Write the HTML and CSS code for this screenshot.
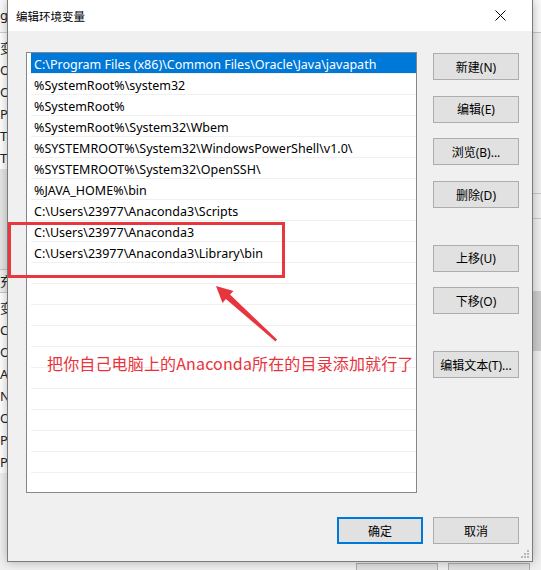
FILE: index.html
```html
<!DOCTYPE html>
<html lang="zh-CN">
<head>
<meta charset="utf-8">
<title>编辑环境变量</title>
<link rel="stylesheet" href="styles.css">
</head>
<body>
<div class="desk">
  <div class="behind">
    <div class="b-main">
      <div class="b-left">
        <div class="b-top">g</div>
        <div class="b-group">
          <div class="b-line">变</div>
          <div class="b-line">O</div>
          <div class="b-line">O</div>
          <div class="b-line">Pa</div>
          <div class="b-line">TE</div>
          <div class="b-line">TM</div>
        </div>
        <div class="b-band"></div>
        <div class="b-head">充</div>
        <div class="b-group">
          <div class="b-line">变</div>
          <div class="b-line">Co</div>
          <div class="b-line">Oi</div>
          <div class="b-line">A</div>
          <div class="b-line">N</div>
          <div class="b-line">O</div>
          <div class="b-line">Pa</div>
          <div class="b-line">PA</div>
        </div>
      </div>
      <div class="b-right">
        <div class="b-rtop"></div>
        <div class="b-rline b-r1"></div>
        <div class="b-rline b-r2"></div>
        <div class="b-thumb"></div>
      </div>
    </div>
    <div class="b-foot">
      <span class="b-btn"></span>
      <span class="b-btn"></span>
    </div>
  </div>

  <div class="dialog">
    <div class="titlebar">
      <span class="title">编辑环境变量</span>
      <svg class="close" width="11" height="11" viewBox="0 0 11 11"><path d="M0.5 0.5 L10.5 10.5 M10.5 0.5 L0.5 10.5" stroke="#000" stroke-width="1" fill="none"/></svg>
    </div>
    <div class="body">
      <div class="main">
        <div class="list">
          <div class="row sel">C:\Program Files (x86)\Common Files\Oracle\Java\javapath</div>
          <div class="row">%SystemRoot%\system32</div>
          <div class="row">%SystemRoot%</div>
          <div class="row">%SystemRoot%\System32\Wbem</div>
          <div class="row">%SYSTEMROOT%\System32\WindowsPowerShell\v1.0\</div>
          <div class="row">%SYSTEMROOT%\System32\OpenSSH\</div>
          <div class="row">%JAVA_HOME%\bin</div>
          <div class="row">C:\Users\23977\Anaconda3\Scripts</div>
          <div class="row">C:\Users\23977\Anaconda3</div>
          <div class="row">C:\Users\23977\Anaconda3\Library\bin</div>
          <div class="row"></div>
          <div class="row"></div>
          <div class="row"></div>
          <div class="row"></div>
          <div class="row"></div>
          <div class="row"></div>
          <div class="row"></div>
          <div class="row"></div>
          <div class="row"></div>
          <div class="row"></div>
          <div class="row"></div>
          <div class="row"></div>
        </div>
        <div class="side">
          <button class="btn">新建(N)</button>
          <button class="btn">编辑(E)</button>
          <button class="btn">浏览(B)...</button>
          <button class="btn">删除(D)</button>
          <button class="btn spaced">上移(U)</button>
          <button class="btn">下移(O)</button>
          <button class="btn spaced">编辑文本(T)...</button>
        </div>
      </div>
      <div class="footer">
        <button class="btn default">确定</button>
        <button class="btn">取消</button>
      </div>
    </div>
    <svg class="grip" width="10" height="10" viewBox="0 0 10 10">
      <rect x="7" y="1" width="2" height="2" fill="#b8b8b8"/>
      <rect x="4" y="4" width="2" height="2" fill="#b8b8b8"/>
      <rect x="7" y="4" width="2" height="2" fill="#b8b8b8"/>
      <rect x="1" y="7" width="2" height="2" fill="#b8b8b8"/>
      <rect x="4" y="7" width="2" height="2" fill="#b8b8b8"/>
      <rect x="7" y="7" width="2" height="2" fill="#b8b8b8"/>
    </svg>
  </div>

  <svg class="annot" width="541" height="570" viewBox="0 0 541 570">
    <rect x="9.5" y="223.5" width="274" height="53" fill="none" stroke="#e7383f" stroke-width="3"/>
    <polygon points="216,286 233.5,291 230,294.5 277,339.5 275.5,341.5 225.9,298.9 222.5,303" fill="#e8343c"/>
  </svg>
  <div class="note">把你自己电脑上的Anaconda所在的目录添加就行了</div>
</div>
</body>
</html>
```

FILE: styles.css
```css
html, body {
  margin: 0;
  padding: 0;
}
body {
  width: 541px;
  height: 570px;
  overflow: hidden;
  background: #f0f0f0;
  font-family: "Noto Sans", "Noto Sans CJK SC", sans-serif;
  color: #000;
}
.desk {
  position: relative;
  width: 541px;
  height: 570px;
  overflow: hidden;
}

/* window behind the dialog */
.behind {
  display: flex;
  flex-direction: column;
  width: 100%;
  height: 100%;
}
.b-main {
  flex: 1;
  display: flex;
}
.b-left {
  flex: 1;
  display: flex;
  flex-direction: column;
  font-size: 13px;
  color: #222;
}
.b-top {
  height: 32px;
  line-height: 30px;
  background: #fafafa;
  border-bottom: 1px solid #d0d0d0;
}
.b-group {
  padding-top: 4px;
  background: #fff;
}
.b-line {
  height: 22px;
  line-height: 22px;
  white-space: nowrap;
}
.b-band {
  height: 100px;
  background: #e6e6e6;
  border-bottom: 1px solid #c8c8c8;
}
.b-head {
  height: 22px;
  line-height: 22px;
  background: #f0f0f0;
  border-bottom: 1px solid #c8c8c8;
}
.b-right {
  width: 8px;
  display: flex;
  flex-direction: column;
  background: #f0f0f0;
  border-left: 1px solid #dadada;
}
.b-rtop {
  height: 32px;
  background: #fafafa;
  border-bottom: 1px solid #c8c8c8;
}
.b-rline {
  border-bottom: 1px solid #c8c8c8;
}
.b-r1 { height: 160px; }
.b-r2 { height: 24px; }
.b-thumb {
  margin-top: 72px;
  height: 60px;
  background: #cdcdcd;
}
.b-foot {
  height: 14px;
  display: flex;
  gap: 10px;
  padding-left: 356px;
  align-items: flex-end;
}
.b-btn {
  width: 80px;
  height: 6px;
  background: #e1e1e1;
  border: 1px solid #adadad;
  border-bottom: none;
}

/* dialog */
.dialog {
  position: absolute;
  left: 7px;
  top: 0;
  width: 524px;
  height: 561px;
  border: 1px solid #7a7a7a;
  border-top: none;
  background: #f0f0f0;
  box-shadow: 0 0 10px rgba(0, 0, 0, 0.28);
  display: flex;
  flex-direction: column;
}
.titlebar {
  height: 31px;
  flex: none;
  background: #fff;
  display: flex;
  align-items: center;
  justify-content: space-between;
  padding: 0 26px 0 8px;
}
.title {
  font-family: "Noto Sans CJK SC", sans-serif;
  font-size: 11.5px;
  color: #000;
}
.close {
  display: block;
}
.body {
  flex: 1;
  display: flex;
  flex-direction: column;
  padding: 21px 13px 0 18px;
}
.main {
  display: flex;
  gap: 16px;
}
.list {
  box-sizing: border-box;
  width: 391px;
  height: 441px;
  border: 1px solid #828790;
  background: #fff;
  overflow: hidden;
  padding-left: 4px;
}
.row {
  box-sizing: border-box;
  height: 21px;
  line-height: 19px;
  padding-top: 1.5px;
  border-bottom: 1px solid #f0f0f0;
  padding-left: 3px;
  font-size: 12.5px;
  white-space: nowrap;
  overflow: hidden;
}
.row.sel {
  background: #0078d7;
  color: #fff;
}
.side {
  width: 86px;
  padding-top: 1px;
  display: flex;
  flex-direction: column;
  gap: 15.7px;
}
.btn {
  box-sizing: border-box;
  width: 86px;
  height: 27px;
  padding: 0;
  margin: 0;
  background: #e1e1e1;
  border: 1px solid #adadad;
  font-family: "Noto Sans", "Noto Sans CJK SC", sans-serif;
  font-size: 12px;
  color: #000;
  white-space: nowrap;
}
.btn.spaced {
  margin-top: 21px;
}
.btn.default {
  border: 2px solid #0078d7;
}
.footer {
  margin-top: 24px;
  display: flex;
  justify-content: flex-end;
  gap: 10px;
}
.grip {
  position: absolute;
  right: 2px;
  bottom: 2px;
}

/* annotations */
.annot {
  position: absolute;
  left: 0;
  top: 0;
  pointer-events: none;
}
.note {
  position: absolute;
  left: 47px;
  top: 352px;
  font-family: "Noto Sans CJK SC", sans-serif;
  font-size: 16px;
  letter-spacing: 0.15px;
  line-height: 22px;
  color: #e8333c;
  white-space: nowrap;
}
```
